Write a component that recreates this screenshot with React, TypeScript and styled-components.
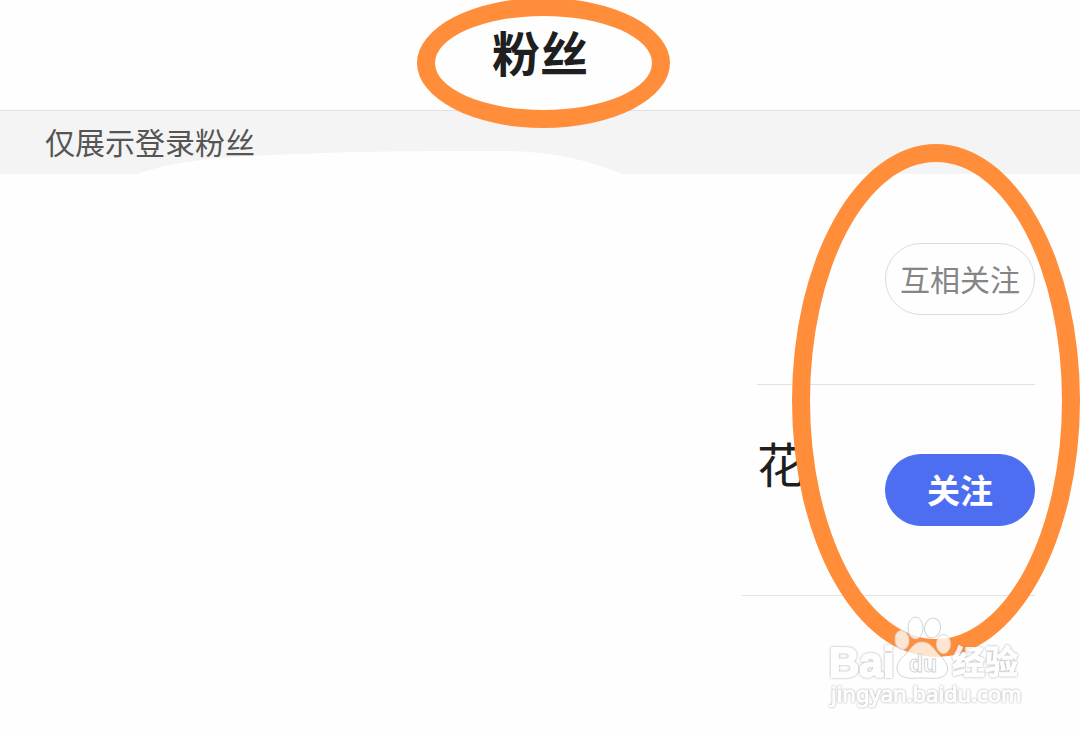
import React from "react";
import styled, { createGlobalStyle } from "styled-components";

const GlobalStyle = createGlobalStyle`
  * { box-sizing: border-box; }
  body {
    margin: 0;
    background: #fefefe;
    font-family: "Noto Sans CJK SC", "Noto Sans", sans-serif;
  }
`;

const Page = styled.div`
  position: relative;
  min-height: 100vh;
  overflow: hidden;
`;

const Header = styled.header`
  display: flex;
  justify-content: center;
  height: 111px;
  padding-top: 15px;
  border-bottom: 1px solid #e0e0e0;
`;

const TitleMark = styled.div`
  position: relative;
  z-index: 1;
`;

const Title = styled.h1`
  margin: 0;
  font-size: 48px;
  line-height: 72px;
  font-weight: 700;
  color: #1f1f1f;
`;

const Notice = styled.p`
  position: relative;
  height: 63px;
  margin: 0;
  padding: 8px 45px;
  background: #f4f4f4;
  color: #555;
  font-size: 30px;
  line-height: 44px;
`;

const Erasure = styled.svg`
  position: absolute;
  left: 138px;
  bottom: 0;
`;

const Ring = styled.div`
  position: absolute;
  border: 18px solid #ff8d3a;
  border-radius: 50%;
  pointer-events: none;
`;

const TitleRing = styled(Ring)`
  top: -17px;
  left: -75px;
  width: 253px;
  height: 130px;
`;

const ActionsRing = styled(Ring)`
  top: -30px;
  right: 0;
  width: 288px;
  height: 513px;
`;

const FanList = styled.ul`
  position: relative;
  margin: 0;
  padding: 0 45px 0 0;
  list-style: none;
`;

const Fan = styled.li<{ $width: number }>`
  display: flex;
  align-items: center;
  width: ${(p) => p.$width}px;
  height: 211px;
  margin-left: auto;
  border-bottom: 1px solid #e2e2e2;
`;

const Name = styled.span`
  flex: 1;
  height: 128px;
  padding-left: 15px;
  color: #1f1f1f;
  font-size: 48px;
  line-height: 72px;
`;

const FollowButton = styled.button<{ $mutual?: boolean }>`
  width: 150px;
  height: 72px;
  margin-left: auto;
  padding: 0 0 2px;
  border: 1px solid ${(p) => (p.$mutual ? "#dcdcdc" : "#4d6ef0")};
  border-radius: 36px;
  background: ${(p) => (p.$mutual ? "#fefefe" : "#4d6ef0")};
  color: ${(p) => (p.$mutual ? "#858585" : "#fff")};
  font-family: inherit;
  font-size: ${(p) => (p.$mutual ? 30 : 33)}px;
  font-weight: ${(p) => (p.$mutual ? 400 : 700)};
  line-height: 48px;
`;

const Watermark = styled.svg`
  position: absolute;
  right: 50px;
  top: 438px;
`;

const OutlinedText = styled.g`
  fill: #fff;
  stroke: #fff;
  stroke-linejoin: round;
  filter: drop-shadow(0 0 1px #999);
  opacity: 0.85;
`;

function BaiduMark() {
  return (
    <Watermark width="210" height="104" viewBox="820 612 210 104" role="img" aria-label="Baidu 经验">
      <g fill="#fff" fillOpacity="0.76" stroke="#d4d4d4" strokeWidth="1">
        <ellipse cx="915.5" cy="628" rx="7.5" ry="11" />
        <ellipse cx="932.5" cy="628" rx="8" ry="10" transform="rotate(10 932.5 628)" />
        <ellipse cx="902" cy="640" rx="7" ry="9.5" transform="rotate(-8 902 640)" />
        <ellipse cx="943.5" cy="644" rx="7" ry="9.5" />
        <path d="M922 642C914 642 911 649 905 655C897 661 895 669 899 674C904 680 915 678 923 678C931 678 941 680 946 674C950 668 946 661 940 656C934 650 931 642 922 642Z" />
      </g>
      <OutlinedText>
        <text x="829" y="677" fontFamily="Liberation Sans, sans-serif" fontWeight="700" fontSize="42" strokeWidth="2">Bai</text>
        <text x="952" y="674" fontFamily="Noto Sans CJK SC, sans-serif" fontWeight="700" fontSize="33" strokeWidth="1">经验</text>
        <text x="831" y="702" fontFamily="Noto Sans, sans-serif" fontSize="22" strokeWidth="1">jingyan.baidu.com</text>
      </OutlinedText>
      <text x="909" y="672" fontFamily="Liberation Sans, sans-serif" fontSize="23" fontWeight="700" fill="#fff" stroke="#d4d4d4" strokeWidth="1">du</text>
    </Watermark>
  );
}

export default function App() {
  return (
    <Page>
      <GlobalStyle />
      <Header>
        <TitleMark>
          <Title>粉丝</Title>
          <TitleRing />
        </TitleMark>
      </Header>
      <Notice>
        仅展示登录粉丝
        <Erasure width="484" height="24" viewBox="0 0 484 24" aria-hidden="true">
          <path d="M0 24C28 13 67 9 112 6C170 3 240 1 320 1H362C405 1 442 7 484 24Z" fill="#fefefe" />
        </Erasure>
      </Notice>
      <FanList>
        <Fan $width={278}>
          <FollowButton $mutual>互相关注</FollowButton>
        </Fan>
        <Fan $width={293}>
          <Name>花</Name>
          <FollowButton>关注</FollowButton>
        </Fan>
        <ActionsRing as="li" aria-hidden="true" />
        <li>
          <BaiduMark />
        </li>
      </FanList>
    </Page>
  );
}
